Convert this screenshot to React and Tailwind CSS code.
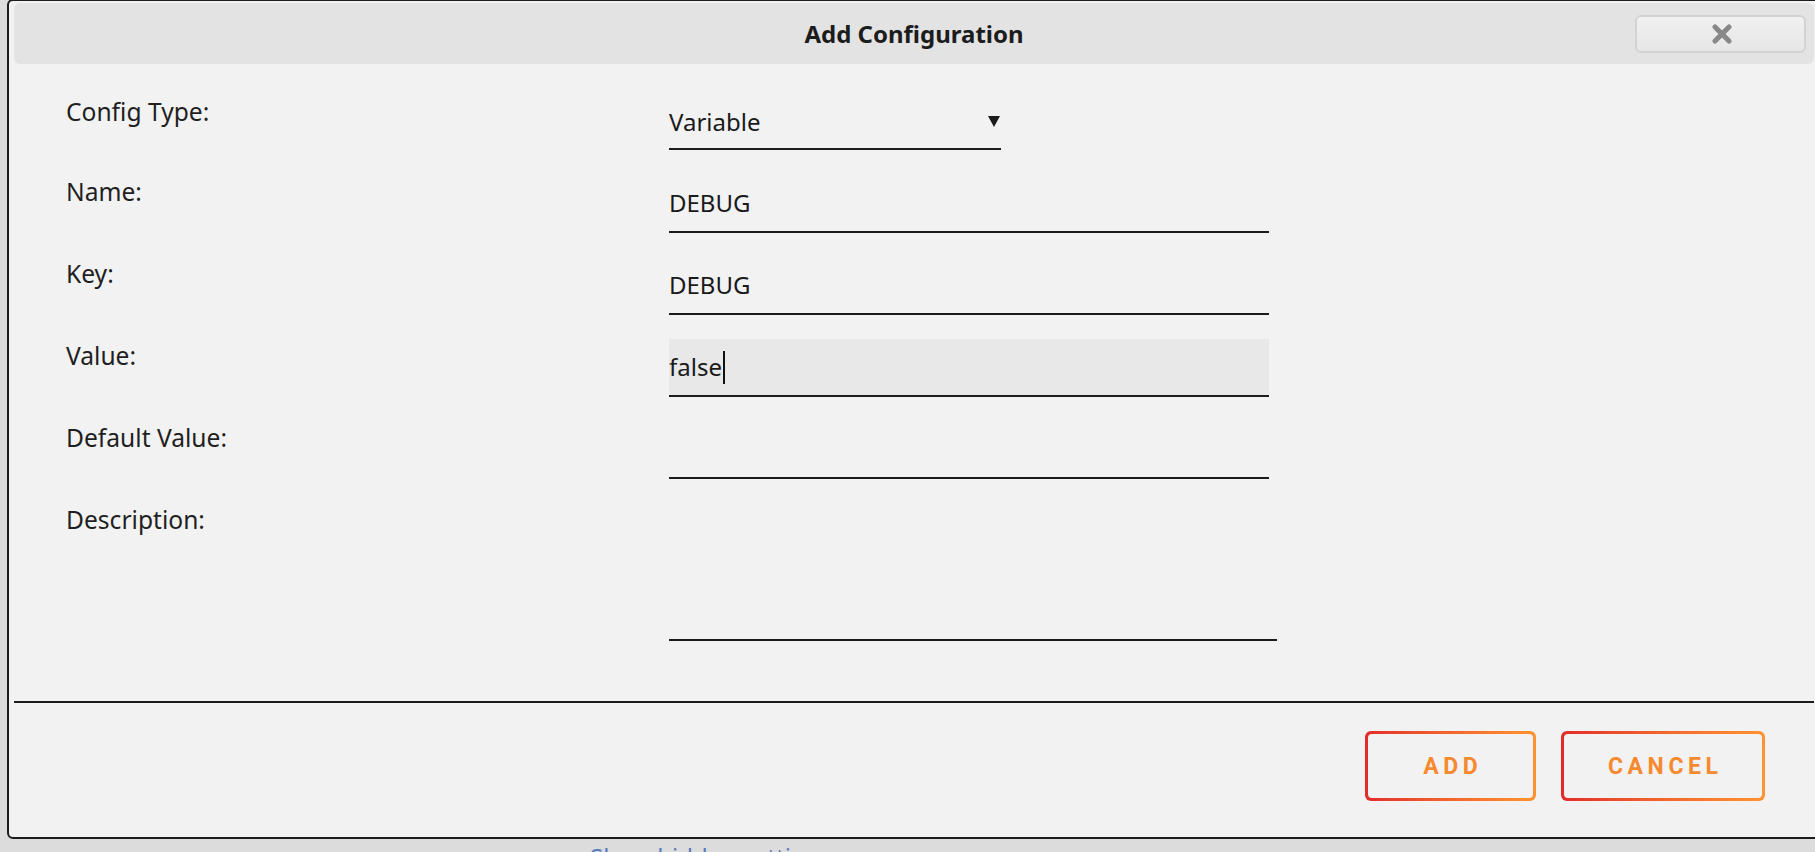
import React from "react";

const font = { fontFamily: '"Noto Sans", "Open Sans", sans-serif' };

function Row({ label, children, className = "" }) {
  return (
    <div className={"flex " + className}>
      <div className="w-[655px] shrink-0 pl-[52px] text-[24.6px] leading-[34px] text-[#1f1f1f]">
        {label}
      </div>
      {children}
    </div>
  );
}

function GradientButton({ label, width }) {
  return (
    <div className={"h-[70px] rounded-[6px] bg-gradient-to-r from-[#e22a2a] to-[#ff9330] p-[3px] " + width}>
      <div className="flex h-full w-full items-center justify-center rounded-[4px] bg-[#f2f2f2]">
        <span
          className="pl-[0.2em] text-[23px] font-bold leading-none tracking-[0.2em] text-[#f7892f]"
          style={{ fontFamily: 'Roboto, "Liberation Sans", sans-serif' }}
        >
          {label}
        </span>
      </div>
    </div>
  );
}

export default function App() {
  return (
    <div className="h-[852px] w-[1815px] overflow-hidden bg-[#dcdcdc]" style={font}>
      <div className="-mt-px ml-[7px] flex h-[840px] w-[1814px] flex-col rounded-[6px] border-2 border-[#1c1c1c] bg-[#f2f2f2] px-[5px] pt-[2px]">
        {/* Header */}
        <div className="grid h-[61px] shrink-0 grid-cols-[1fr_auto_1fr] items-center rounded-[6px] bg-[#e3e3e3]">
          <div />
          <div className="text-[24px] font-bold text-[#1c1c1c]">Add Configuration</div>
          <div className="flex justify-end pr-[8px]">
            <div className="flex h-[38px] w-[171px] items-center justify-center rounded-[6px] border-2 border-[#d3d3d3] bg-gradient-to-b from-[#f1f1f1] to-[#e6e6e6]">
              <svg width="24" height="24" viewBox="0 0 24 24" className="ml-[2px]">
                <line x1="5" y1="5" x2="19" y2="19" stroke="#888888" strokeWidth="5.2" strokeLinecap="round" />
                <line x1="19" y1="5" x2="5" y2="19" stroke="#888888" strokeWidth="5.2" strokeLinecap="round" />
              </svg>
            </div>
          </div>
        </div>

        {/* Form */}
        <div className="flex flex-col pt-[31px] text-[24px] text-[#1a1a1a]">
          <Row label="Config Type:">
            <div className="flex h-[55px] w-[332px] items-center justify-between border-b-2 border-[#1c1c1c] pr-[1px]">
              <span>Variable</span>
              <svg width="12" height="11" viewBox="0 0 12 11">
                <polygon points="0,0 12,0 6,11" fill="#1c1c1c" />
              </svg>
            </div>
          </Row>
          <Row label="Name:" className="mt-[25px]">
            <div className="flex h-[58px] w-[600px] items-center border-b-2 border-[#1c1c1c]">DEBUG</div>
          </Row>
          <Row label="Key:" className="mt-[24px]">
            <div className="flex h-[58px] w-[600px] items-center border-b-2 border-[#1c1c1c]">DEBUG</div>
          </Row>
          <Row label="Value:" className="mt-[24px]">
            <div className="flex h-[58px] w-[600px] items-center border-b-2 border-[#1c1c1c] bg-[#e8e8e8]">
              <span>false</span>
              <span className="ml-px inline-block h-[33px] w-[2px] bg-[#111]" />
            </div>
          </Row>
          <Row label="Default Value:" className="mt-[24px]">
            <div className="h-[58px] w-[600px] border-b-2 border-[#1c1c1c]" />
          </Row>
          <Row label="Description:" className="mt-[24px]">
            <div className="h-[138px] w-[608px] border-b-2 border-[#1c1c1c]" />
          </Row>
        </div>

        {/* Separator */}
        <div className="mt-[60px] h-[2px] shrink-0 bg-[#1c1c1c]" />

        {/* Buttons */}
        <div className="mt-[28px] flex justify-end gap-[25px] pr-[49px]">
          <GradientButton label="ADD" width="w-[171px]" />
          <GradientButton label="CANCEL" width="w-[204px]" />
        </div>
      </div>
      <div className="mt-[1px] pl-[590px] text-[24px] leading-[33px] text-[#5b7bc0]">Show hidden settings</div>
    </div>
  );
}
